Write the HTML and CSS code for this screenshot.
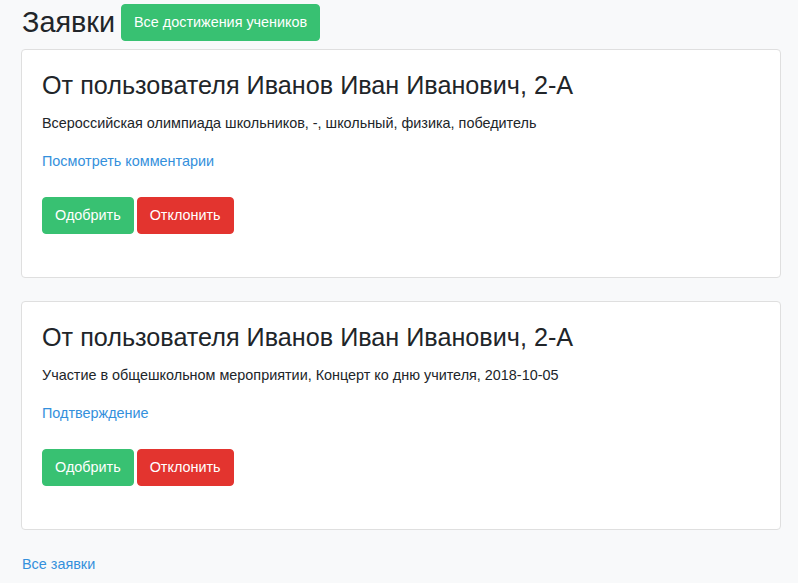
FILE: index.html
```html
<!DOCTYPE html>
<html lang="ru">
<head>
<meta charset="utf-8">
<link rel="stylesheet" href="styles.css">
</head>
<body>
<div class="page">
  <div class="head">
    <h1 class="title">Заявки</h1>
    <a class="btn btn-green" href="#">Все достижения учеников</a>
  </div>
  <div class="card">
    <h2 class="card-title">От пользователя Иванов Иван Иванович, 2-А</h2>
    <p class="card-text">Всероссийская олимпиада школьников, -, школьный, физика, победитель</p>
    <p class="card-link"><a href="#">Посмотреть комментарии</a></p>
    <div class="actions">
      <button class="btn btn-green">Одобрить</button>
      <button class="btn btn-red">Отклонить</button>
    </div>
  </div>
  <div class="card">
    <h2 class="card-title">От пользователя Иванов Иван Иванович, 2-А</h2>
    <p class="card-text">Участие в общешкольном мероприятии, Концерт ко дню учителя, 2018-10-05</p>
    <p class="card-link"><a href="#">Подтверждение</a></p>
    <div class="actions">
      <button class="btn btn-green">Одобрить</button>
      <button class="btn btn-red">Отклонить</button>
    </div>
  </div>
  <a class="all-link" href="#">Все заявки</a>
</div>
</body>
</html>
```
FILE: styles.css
```css
html, body {
  margin: 0;
  padding: 0;
  background: #f8f9fa;
  font-family: "Liberation Sans", Arial, sans-serif;
  color: #212529;
  font-size: 14.4px;
}
.page {
  width: 760px;
  padding: 4px 0 0 21px;
}
.head {
  display: flex;
  align-items: center;
  gap: 6px;
  margin-bottom: 8px;
}
.title {
  margin: 0;
  font-size: 28.8px;
  font-weight: 400;
  line-height: 37px;
  padding-left: 1px;
}
a {
  color: #3490dc;
  text-decoration: none;
}
.btn {
  display: inline-block;
  box-sizing: border-box;
  height: 37px;
  padding: 0 12px;
  line-height: 35px;
  font-family: inherit;
  font-size: 14.4px;
  border: 1px solid transparent;
  border-radius: 4px;
  color: #fff;
  cursor: pointer;
}
.btn-green {
  background: #38c172;
  border-color: #38c172;
}
.btn-red {
  background: #e3342f;
  border-color: #e3342f;
}
.card {
  background: #fff;
  border: 1px solid #dfdfdf;
  border-radius: 4px;
  padding: 20px 20px 43px;
  margin-bottom: 23px;
}
.card-title {
  margin: 0 0 12px;
  font-size: 25.2px;
  font-weight: 400;
  line-height: 30px;
}
.card-text {
  margin: 0 0 15px;
  line-height: 23px;
}
.card-link {
  margin: 0 0 24px;
  line-height: 23px;
}
.actions {
  display: flex;
  gap: 3px;
}
.all-link {
  display: inline-block;
  line-height: 23px;
  padding-left: 1px;
}
```
